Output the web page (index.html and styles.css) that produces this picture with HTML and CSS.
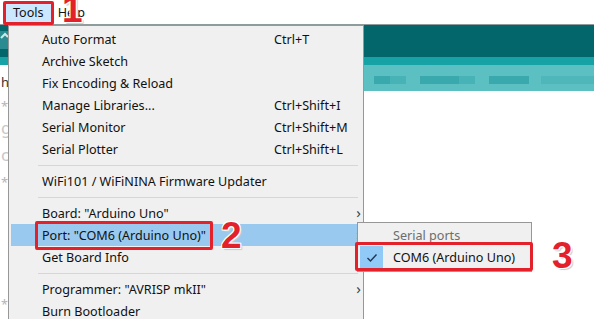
FILE: index.html
```html
<!DOCTYPE html>
<html lang="en">
<head>
    <meta charset="UTF-8">
    <title>Arduino IDE - Tools menu</title>
    <link rel="stylesheet" href="styles.css">
</head>
<body>
    <div class="window">
        <div class="menubar">
            <span class="menu-title active">Tools</span>
            <span class="menu-title">Help</span>
        </div>
        <div class="toolbar">
            <div class="tool-btn">
                <svg width="8" height="14" viewBox="0 0 8 14"><path d="M1 7 L5 3 L8 6" fill="none" stroke="#cfe9ea" stroke-width="2"/></svg>
            </div>
        </div>
        <div class="toolbar-strip"></div>
        <div class="tabs">
            <div class="tab-gap"></div>
            <div class="tab-block dark"></div>
            <div class="tab-block"></div>
            <div class="tab-block dark wide"></div>
            <div class="tab-block"></div>
            <div class="tab-block dark wide"></div>
            <div class="tab-block light"></div>
        </div>
        <div class="editor">
            <div class="gutter-line dark">h</div>
            <div class="gutter-line">*</div>
            <div class="gutter-line tall">g</div>
            <div class="gutter-line tall">c</div>
            <div class="gutter-line">*</div>
        </div>
        <div class="gutter-bottom">*</div>
    </div>

    <div class="dropdown">
        <div class="item"><span class="label">Auto Format</span><span class="key">Ctrl+T</span></div>
        <div class="item"><span class="label">Archive Sketch</span></div>
        <div class="item"><span class="label">Fix Encoding &amp; Reload</span></div>
        <div class="item"><span class="label">Manage Libraries...</span><span class="key">Ctrl+Shift+I</span></div>
        <div class="item"><span class="label">Serial Monitor</span><span class="key">Ctrl+Shift+M</span></div>
        <div class="item"><span class="label">Serial Plotter</span><span class="key">Ctrl+Shift+L</span></div>
        <div class="separator"></div>
        <div class="item"><span class="label">WiFi101 / WiFiNINA Firmware Updater</span></div>
        <div class="separator"></div>
        <div class="item has-sub"><span class="label">Board: "Arduino Uno"</span><span class="arrow">&#8250;</span></div>
        <div class="item has-sub selected"><span class="label">Port: "COM6 (Arduino Uno)"</span><span class="arrow">&#8250;</span></div>
        <div class="item"><span class="label">Get Board Info</span></div>
        <div class="separator"></div>
        <div class="item has-sub"><span class="label">Programmer: "AVRISP mkII"</span><span class="arrow">&#8250;</span></div>
        <div class="item"><span class="label">Burn Bootloader</span></div>
    </div>

    <div class="submenu">
        <div class="sub-item header">Serial ports</div>
        <div class="sub-item checked">
            <span class="check">
                <svg width="12" height="10" viewBox="0 0 12 10"><path d="M1.5 5 L4.5 8 L10.5 1.5" fill="none" stroke="#1e3553" stroke-width="1.4"/></svg>
            </span>
            COM6 (Arduino Uno)
        </div>
    </div>

    <div class="mark mark-tools"></div>
    <div class="mark mark-port"></div>
    <div class="mark mark-com"></div>

    <span class="step step-1">1</span>
    <span class="step step-2">2</span>
    <span class="step step-3">3</span>
</body>
</html>
```

FILE: styles.css
```css
body {
    margin: 0;
    width: 594px;
    height: 319px;
    overflow: hidden;
    position: relative;
    background: #fff;
    font-family: "Noto Sans", "Open Sans", sans-serif;
    font-size: 12.6px;
    color: #111;
}
.window {
    display: flex;
    flex-direction: column;
}
.menubar {
    height: 25px;
    box-sizing: border-box;
    display: flex;
    align-items: center;
    padding-left: 6px;
    border-bottom: 1px solid #8f9c9d;
}
.menu-title {
    padding: 1px 7px 0;
    height: 19px;
    line-height: 19px;
}
.menu-title.active {
    background-color: #cce8ff;
}
.toolbar {
    height: 32px;
    background-color: #02666a;
}
.tool-btn {
    width: 8px;
    height: 18px;
    margin-top: 6px;
    background-color: #2a8c90;
}
.toolbar-strip {
    height: 8px;
    background-color: #17a2a6;
}
.tabs {
    height: 26px;
    display: flex;
    background-color: #5cc0c3;
    padding-top: 11px;
    box-sizing: border-box;
}
.tab-gap {
    width: 9px;
    background: #fff;
    margin-top: -11px;
    margin-right: 360px;
}
.tab-block {
    width: 18px;
    height: 8px;
    background-color: #48b3b6;
}
.tab-block.dark {
    background-color: #3aa9ad;
    margin-left: 6px;
}
.tab-block.wide {
    width: 44px;
    margin-left: 14px;
}
.tab-block.light {
    width: 60px;
    margin-left: 12px;
    background-color: #4fb7ba;
}
.editor {
    margin-top: -18px;
}
.gutter-line {
    height: 22px;
    line-height: 22px;
    font-size: 13px;
    color: #b5b5b5;
    padding-left: 1px;
}
.gutter-line.dark {
    color: #333;
    line-height: 18px;
}
.gutter-line.tall {
    height: 27px;
    font-size: 17px;
    color: #c8c8c8;
}
.gutter-bottom {
    position: absolute;
    left: 1px;
    top: 296px;
    color: #b5b5b5;
}

/* Tools dropdown */
.dropdown {
    position: absolute;
    left: 8px;
    top: 25px;
    width: 356px;
    box-sizing: border-box;
    padding: 2px 5px 2px 2px;
    background-color: #f0f0f0;
    border: 1px solid #979797;
    border-top-color: #8f9c9d;
}
.item {
    height: 22px;
    display: flex;
    align-items: center;
    position: relative;
}
.item .label {
    width: 232px;
    padding-left: 31px;
    white-space: nowrap;
}
.item .key {
    white-space: nowrap;
}
.item .arrow {
    position: absolute;
    right: -3px;
    top: 0;
    line-height: 20px;
    font-size: 15px;
    color: #444;
}
.item.selected {
    background-color: #99c9ef;
}
.separator {
    height: 10px;
    box-sizing: border-box;
    margin-left: 27px;
    border-top: 5px solid transparent;
    background-clip: padding-box;
}
.separator::after {
    content: "";
    display: block;
    height: 1px;
    background-color: #d6d6d6;
}

/* Port submenu */
.submenu {
    position: absolute;
    left: 357px;
    top: 222px;
    width: 175px;
    box-sizing: border-box;
    padding: 1px 2px 2px;
    background-color: #f0f0f0;
    border: 1px solid #979797;
}
.sub-item {
    height: 22px;
    display: flex;
    align-items: center;
    padding-left: 33px;
}
.sub-item.header {
    color: #6d6d6d;
}
.sub-item.checked {
    height: 23px;
    padding-left: 0;
}
.check {
    width: 23px;
    height: 23px;
    margin-right: 10px;
    background-color: #91c9f7;
    display: flex;
    align-items: center;
    justify-content: center;
}

/* Red annotation boxes */
.mark {
    position: absolute;
    box-sizing: border-box;
    border: 3px solid #e3212b;
    border-radius: 2px;
}
.mark-tools {
    left: 3px;
    top: 1px;
    width: 51px;
    height: 24px;
}
.mark-port {
    left: 35px;
    top: 221px;
    width: 178px;
    height: 29px;
}
.mark-com {
    left: 355px;
    top: 242px;
    width: 178px;
    height: 29px;
}
.step {
    position: absolute;
    font-family: "Liberation Sans", Arial, sans-serif;
    font-weight: bold;
    font-size: 37px;
    line-height: 37px;
    color: #e3212b;
    text-shadow: 1px 1px 0 #fff, -1px -1px 0 #fff, 1px -1px 0 #fff, -1px 1px 0 #fff, 2px 2px 1px #ccc;
}
.step-1 {
    left: 62px;
    top: -9px;
}
.step-2 {
    left: 221px;
    top: 217px;
}
.step-3 {
    left: 552px;
    top: 237px;
}
```
